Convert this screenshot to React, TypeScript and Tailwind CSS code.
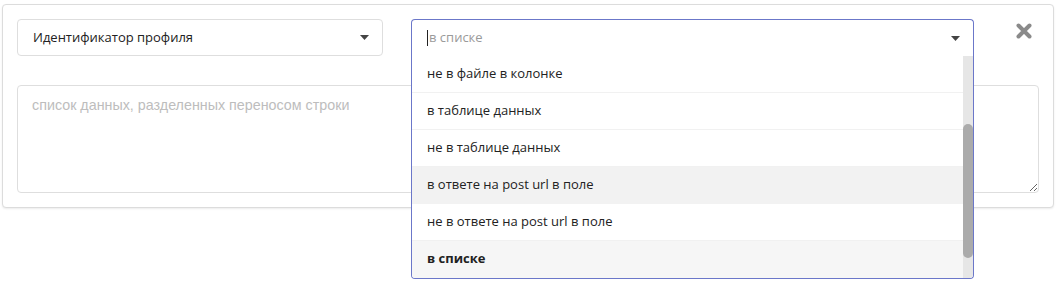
import React from "react";

const items = [
  { label: "не в файле в колонке" },
  { label: "в таблице данных" },
  { label: "не в таблице данных" },
  { label: "в ответе на post url в поле", hover: true },
  { label: "не в ответе на post url в поле" },
  { label: "в списке", selected: true },
];

function Caret() {
  return (
    <svg width="9" height="5" viewBox="0 0 9 5" className="shrink-0">
      <path d="M0 0 H9 L4.5 5 Z" fill="#444" />
    </svg>
  );
}

export default function App() {
  return (
    <div className="min-h-[286px] bg-white pl-[2px] pr-[5px] pt-[4px] font-['Open_Sans','Noto_Sans',sans-serif]">
      <div className="rounded-[4px] border border-[#dcdcdc] bg-white px-[14px] pb-[14px] pt-[14px] shadow-[0_1px_2px_rgba(0,0,0,0.08)]">
        <div className="flex items-start">
          <div className="flex h-[37px] w-[366px] items-center justify-between rounded-[4px] border border-[#dedede] pl-[15px] pr-[13px] text-[13px] text-[#222]">
            <span>Идентификатор профиля</span>
            <Caret />
          </div>

          <div className="relative ml-[28px] w-[563px]">
            <div className="flex h-[37px] items-center justify-between rounded-t-[4px] border border-b-0 border-[#6b77c9] pl-[15px] pr-[13px] text-[13px]">
              <span className="flex items-center text-[#9a9a9a]">
                <span className="mr-[1px] h-[16px] w-[1px] bg-[#222]" />в списке
              </span>
              <Caret />
            </div>
            <div className="absolute left-0 right-0 top-[37px] z-10 overflow-hidden rounded-b-[4px] border border-t-0 border-[#6b77c9] bg-white">
              <div className="relative pr-[10px]">
                {items.map((it) => (
                  <div
                    key={it.label}
                    className={[
                      "flex h-[37px] items-center border-b pl-[15px] text-[13px] text-[#222]",
                      it.hover
                        ? "border-[#f2f2f2] bg-[#f2f2f2]"
                        : it.selected
                        ? "border-transparent bg-[#f6f6f6] font-bold"
                        : "border-[#f1f1f1] bg-white",
                    ].join(" ")}
                  >
                    {it.label}
                  </div>
                ))}
                <div className="absolute bottom-0 right-0 top-0 w-[10px] bg-[#e6e6e6]">
                  <div className="absolute left-0 right-0 top-[68px] h-[134px] rounded-[5px] bg-[#ababab]" />
                </div>
              </div>
            </div>
          </div>

          <div className="flex flex-1 justify-end pr-[7px] pt-[4px]">
            <svg width="16" height="16" viewBox="0 0 16 16">
              <path d="M2.5 2.5 L13.5 13.5 M13.5 2.5 L2.5 13.5" stroke="#8a8a8a" strokeWidth="4" strokeLinecap="round" />
            </svg>
          </div>
        </div>

        <textarea
          placeholder="список данных, разделенных переносом строки"
          className="mt-[29px] block h-[108px] w-full resize-y rounded-[4px] border border-[#dedede] px-[14px] py-[9px] font-['Liberation_Sans',Arial,sans-serif] text-[14.3px] outline-none placeholder:text-[#bdbdbd]"
        />
      </div>
    </div>
  );
}
